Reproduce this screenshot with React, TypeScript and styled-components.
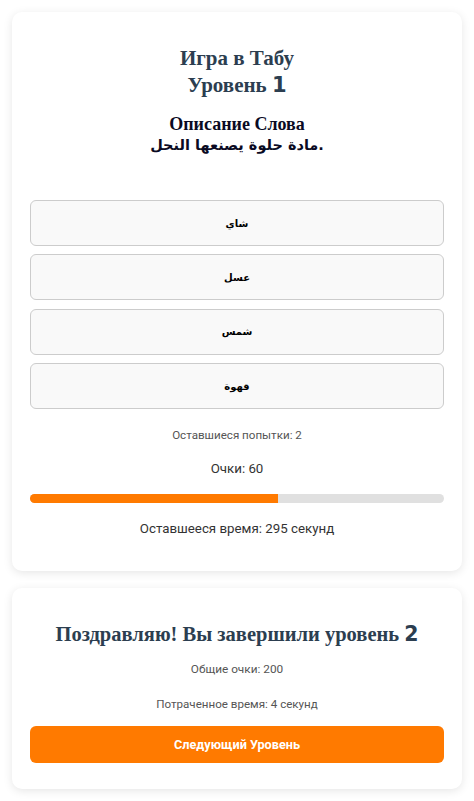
import React from "react";
import styled, { createGlobalStyle } from "styled-components";

const Global = createGlobalStyle`
  html, body { margin: 0; padding: 0; background: #ffffff; }
  body { font-family: Roboto, "Liberation Sans", sans-serif; }
`;

const Page = styled.div`
  display: flex;
  flex-direction: column;
  gap: 17px;
  padding: 12px;
`;

const Card = styled.section<{ $bottom: number }>`
  background: #fff;
  border-radius: 10px;
  box-shadow: 0 2px 10px rgba(0, 0, 0, 0.1);
  padding: 18px 18px ${(p) => p.$bottom}px;
  display: flex;
  flex-direction: column;
  align-items: stretch;
  text-align: center;
`;

const Title = styled.h2<{ $size: number; $top: number }>`
  font-family: "Liberation Serif", "Times New Roman", serif;
  font-weight: 700;
  font-size: ${(p) => p.$size}px;
  line-height: 27px;
  color: #2c3e50;
  margin: ${(p) => p.$top}px 0 0;
`;

const Num = styled.span`
  font-family: "DejaVu Sans", sans-serif;
  font-weight: 700;
`;

const Desc = styled.div`
  margin-top: 16.5px;
  font-family: "Liberation Serif", "Times New Roman", serif;
  font-weight: 700;
  font-size: 18px;
  line-height: 19px;
  color: #0a0a23;
`;

const ArabicLine = styled.span`
  display: block;
  margin-top: 2px;
  font-family: "DejaVu Sans", sans-serif;
  font-size: 14.5px;
`;

const Options = styled.div`
  display: flex;
  flex-direction: column;
  gap: 8.4px;
  margin-top: 45px;
`;

const Option = styled.button`
  height: 46px;
  border: 1px solid #cccccc;
  border-radius: 6px;
  background: #f9f9f9;
  font-family: "DejaVu Sans", sans-serif;
  font-weight: 700;
  font-size: 10px;
  color: #000;
  cursor: pointer;
`;

const Info = styled.p<{ $size: number; $top: number; $color: string }>`
  margin: ${(p) => p.$top}px 0 0;
  font-size: ${(p) => p.$size}px;
  line-height: 1.2;
  color: ${(p) => p.$color};
`;

const Track = styled.div`
  margin-top: 17px;
  height: 9px;
  border-radius: 5px;
  background: #e0e0e0;
  overflow: hidden;
`;

const Fill = styled.div`
  height: 100%;
  background: #ff7a00;
`;

const NextButton = styled.button`
  margin-top: 14px;
  height: 37px;
  border: none;
  border-radius: 6px;
  background: #ff7a00;
  color: #fff;
  font-family: Roboto, "Liberation Sans", sans-serif;
  font-weight: 700;
  font-size: 12.7px;
  cursor: pointer;
`;

const options = ["شاي", "عسل", "شمس", "قهوة"];

export default function App() {
  return (
    <>
      <Global />
      <Page>
        <Card $bottom={34}>
          <Title $size={21} $top={14.5}>
            Игра в Табу
            <br />
            Уровень <Num>1</Num>
          </Title>
          <Desc>
            Описание Слова
            <ArabicLine>مادة حلوة يصنعها النحل.</ArabicLine>
          </Desc>
          <Options>
            {options.map((o) => (
              <Option key={o}>{o}</Option>
            ))}
          </Options>
          <Info $size={11.6} $top={20} $color="#555">
            Оставшиеся попытки: 2
          </Info>
          <Info $size={13.3} $top={18} $color="#333">
            Очки: 60
          </Info>
          <Track>
            <Fill style={{ width: "60%" }} />
          </Track>
          <Info $size={13.3} $top={18} $color="#333">
            Оставшееся время: 295 секунд
          </Info>
        </Card>
        <Card $bottom={26}>
          <Title $size={20.5} $top={15}>
            Поздравляю! Вы завершили уровень <Num>2</Num>
          </Title>
          <Info $size={11.8} $top={14} $color="#555">
            Общие очки: 200
          </Info>
          <Info $size={11.6} $top={22} $color="#555">
            Потраченное время: 4 секунд
          </Info>
          <NextButton>Следующий Уровень</NextButton>
        </Card>
      </Page>
    </>
  );
}
